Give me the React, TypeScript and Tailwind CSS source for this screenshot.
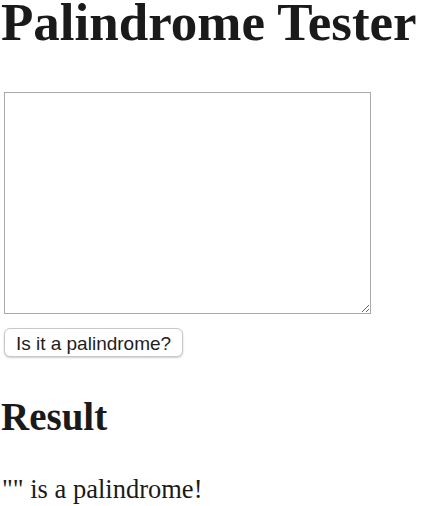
import React from "react";

const App = () => {
  return (
    <div className="bg-white min-h-screen pl-[1px] text-[#1a1a1a] font-['Liberation_Serif','Times_New_Roman',serif]">
      <h1 className="text-[53px] font-bold leading-[42px] h-[40px] pt-[1px] m-0 whitespace-nowrap">
        Palindrome Tester
      </h1>
      <div className="mt-[52px] pl-[3px]">
        <textarea className="block w-[367px] h-[222px] border border-[#a9a9a9] bg-white" />
        <button className="mt-[14px] block w-[179px] h-[29px] rounded-[6px] border border-[#c8c8c8] bg-white shadow-[0_1px_2px_rgba(0,0,0,0.2)] text-[19px] leading-none text-[#1e1e1e] font-['Liberation_Sans',Arial,sans-serif] pt-[1px]">
          Is it a palindrome?
        </button>
      </div>
      <h2 className="mt-[40px] text-[39px] font-bold leading-[39px] h-[39px]">Result</h2>
      <p className="mt-[40px] text-[26.5px] leading-[26px] pl-[1px]">"" is a palindrome!</p>
    </div>
  );
};

export default App;
